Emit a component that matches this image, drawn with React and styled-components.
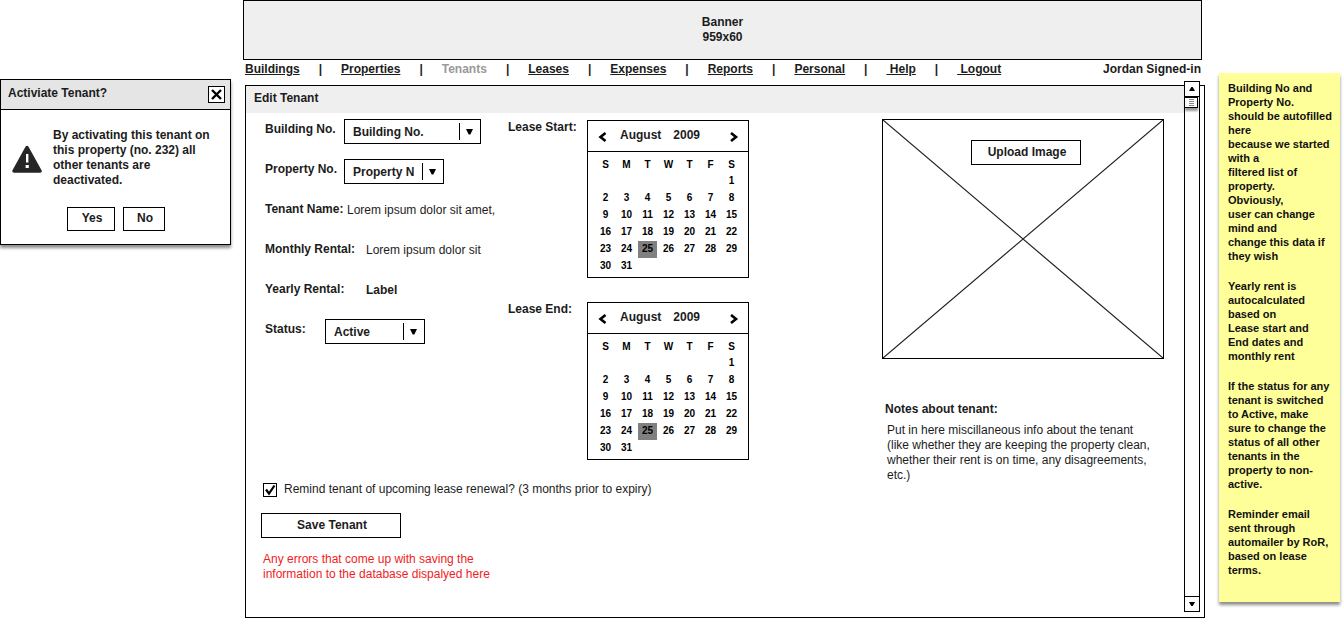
import React, { useState } from "react";
import styled, { createGlobalStyle } from "styled-components";

const GlobalStyle = createGlobalStyle`
  *, *::before, *::after { box-sizing: border-box; }
  body {
    margin: 0;
    background: #fff;
    color: #1c1c1c;
    font: 12px/15px "Liberation Sans", Arial, sans-serif;
  }
  p, h1, h2 { margin: 0; font-size: inherit; }
  button, select, input { font: inherit; color: inherit; margin: 0; }
`;

const Page = styled.div`
  display: flex;
  align-items: flex-start;
  padding-right: 3px;
`;

const Button = styled.button`
  width: ${(p) => p.$width}px;
  height: ${(p) => p.$height || 25}px;
  padding: 0 0 1px 2px;
  border: 1px solid #000;
  border-radius: 0;
  background: #fff;
  font-weight: bold;
  cursor: pointer;
`;

/* Confirmation dialog */

const Dialog = styled.section`
  flex: none;
  width: 231px;
  margin: 79px 12px 0 0;
  border: 1px solid #000;
  background: #fff;
  box-shadow: 0 3px 3px rgba(0, 0, 0, 0.45);
  font-weight: bold;
`;

const DialogHeader = styled.header`
  display: flex;
  justify-content: space-between;
  padding: 6px 5px 6px 7px;
  border-bottom: 1px solid #000;
  background: #e5e5e5;
`;

const CloseButton = styled.button`
  display: grid;
  place-items: center;
  width: 17px;
  height: 17px;
  padding: 0;
  border: 1px solid #000;
  background: #fff;
`;

const DialogMessage = styled.div`
  display: flex;
  gap: 11px;
  padding: 18px 20px 0 11px;

  svg { flex: none; margin-top: 17px; }
`;

const DialogActions = styled.div`
  display: flex;
  gap: 8px;
  padding: 19px 0 13px 66px;
`;

/* Main column */

const Main = styled.main`
  flex: 1;
  min-width: 0;
`;

const Banner = styled.header`
  height: 60px;
  margin-right: 3px;
  padding-top: 14px;
  border: 1px solid #000;
  background: #efefef;
  font-weight: bold;
  text-align: center;
`;

const NavBar = styled.nav`
  display: flex;
  justify-content: space-between;
  height: 25px;
  padding: 2px 4px 0 2px;
  font-weight: bold;
  white-space: pre;
`;

const NavLinks = styled.div`
  display: flex;
  gap: 19px;
`;

const NavLink = styled.a`
  color: ${(p) => (p.$current ? "#999" : "inherit")};
  text-decoration: ${(p) => (p.$current ? "none" : "underline")};
`;

const Panel = styled.div`
  display: flex;
  min-height: 533px;
  margin-left: 2px;
  padding-right: 4px;
  border: 1px solid #000;
`;

const PanelContent = styled.div`
  flex: 1;
  min-width: 0;
`;

const PanelTitle = styled.h1`
  height: 27px;
  padding: 5px 8px;
  background: #efefef;
`;

const PanelBody = styled.form`
  display: flex;
  padding: 6px 20px 0 15px;
`;

const Details = styled.div`
  flex: 1;
  min-width: 0;
`;

const DetailsTop = styled.div`
  display: flex;
`;

const Fields = styled.div`
  width: 247px;
  padding-left: 4px;
`;

const Field = styled.div`
  display: flex;
  align-items: flex-start;
  height: 40px;
`;

const FieldLabel = styled.label`
  flex: none;
  width: ${(p) => p.$width}px;
  padding-top: 3px;
  font-weight: bold;
`;

const FieldValue = styled.output`
  padding-top: 4px;
  font-weight: ${(p) => (p.$bold ? "bold" : "normal")};
`;

const SelectBox = styled.div`
  position: relative;
  width: ${(p) => p.$width}px;

  &::after {
    content: "";
    position: absolute;
    top: 4px;
    bottom: 4px;
    right: 21px;
    border-left: 1px solid #000;
    pointer-events: none;
  }

  svg {
    position: absolute;
    top: 10px;
    right: 8px;
    pointer-events: none;
  }
`;

const Select = styled.select`
  appearance: none;
  display: block;
  width: 100%;
  height: 25px;
  padding: 1px 29px 0 8px;
  border: 1px solid #000;
  border-radius: 0;
  background: #fff;
  font-weight: bold;
`;

const Leases = styled.div`
  display: flex;
  flex-direction: column;
  gap: 24px;
  padding-top: 1px;
`;

const Lease = styled.div`
  display: flex;
  font-weight: bold;
`;

const LeaseLabel = styled.div`
  width: 79px;
`;

const CalendarBox = styled.div`
  width: 162px;
  border: 1px solid #000;
`;

const CalendarHeader = styled.div`
  display: flex;
  justify-content: space-between;
  height: 31px;
  padding: 7px 9px 0;
  border-bottom: 1px solid #000;
`;

const MonthTitle = styled.div`
  display: flex;
  flex: 1;
  gap: 12px;
  padding-left: 13px;
`;

const ArrowButton = styled.button`
  display: grid;
  place-items: center;
  width: 10px;
  height: 17px;
  padding: 0;
  border: 0;
  background: none;
`;

const Days = styled.table`
  table-layout: fixed;
  width: 147px;
  height: 117px;
  margin: 6px 6px 2px 7px;
  border-spacing: 0;
  color: #000;
  font-size: 10px;
  line-height: 14px;
  text-align: center;

  th, td { padding: 0; }
`;

const Day = styled.td`
  border: solid transparent;
  border-width: 0 1px;
  background: ${(p) => (p.$selected ? "#808080" : "none")};
  background-clip: padding-box;
`;

const Reminder = styled.label`
  display: flex;
  align-items: center;
  gap: 7px;
  margin: 22px 0 16px 2px;
  height: 15px;
`;

const CheckBox = styled.span`
  display: grid;
  position: relative;

  input {
    appearance: none;
    width: 14px;
    height: 14px;
    border: 1px solid #000;
    background: #fff;
  }
  svg { position: absolute; top: 0; left: 0; display: none; pointer-events: none; }
  input:checked + svg { display: block; }
`;

const ErrorText = styled.p`
  max-width: 250px;
  margin: 14px 0 0 2px;
  color: #f01c24;
`;

const Side = styled.aside`
  flex: none;
  width: 282px;
`;

const ImageBox = styled.div`
  position: relative;
  height: 240px;
  padding: 20px 0 0 6px;
  border: 1px solid #000;
  text-align: center;

  svg { position: absolute; inset: 0; width: 100%; height: 100%; }
  button { position: relative; }
`;

const Notes = styled.div`
  padding: 43px 10px 0 3px;

  p { padding: 6px 0 0 2px; }
`;

/* Scroll bar */

const ScrollBar = styled.div`
  flex: none;
  display: flex;
  flex-direction: column;
  justify-content: space-between;
  width: 16px;
  margin: -5px 0 5px;
  border: 1px solid #000;
  background: #fff;
`;

const ScrollButton = styled.button`
  display: grid;
  place-items: center;
  width: 14px;
  height: 15px;
  padding: 0;
  border: solid #000;
  border-width: ${(p) => (p.$down ? "1px 0 0" : "0 0 1px")};
  background: #fff;
`;

const Thumb = styled.div`
  display: grid;
  place-items: center;
  width: 13px;
  height: 11px;
  border: solid #000;
  border-width: 1px 1px 1px 0;
  background: #fff;
  box-shadow: 0 3px 2px rgba(0, 0, 0, 0.4);
`;

/* Sticky note */

const StickyNote = styled.aside`
  flex: none;
  display: flex;
  flex-direction: column;
  gap: 16px;
  width: 121px;
  min-height: 529px;
  margin: 73px 0 0 14px;
  padding: 8px 0 16px 9px;
  background: #ff9;
  box-shadow: 0 3px 3px rgba(0, 0, 0, 0.45);
  color: #111;
  font-size: 11px;
  font-weight: bold;
  line-height: 14px;
  white-space: pre;
`;

const NAV = ["Buildings", "Properties", "Tenants", "Leases", "Expenses", "Reports", "Personal", " Help", " Logout"];

const WEEKDAYS = ["S", "M", "T", "W", "T", "F", "S"];

const REMARKS = [
  "Building No and\nProperty No.\nshould be autofilled\nhere\nbecause we started\nwith a\nfiltered list of\nproperty.\nObviously,\nuser can change\nmind and\nchange this data if\nthey wish",
  "Yearly rent is\nautocalculated\nbased on\nLease start and\nEnd dates and\nmonthly rent",
  "If the status for any\ntenant is switched\nto Active, make\nsure to change the\nstatus of all other\ntenants in the\nproperty to non-\nactive.",
  "Reminder email\nsent through\nautomailer by RoR,\nbased on lease\nterms.",
];

function Dropdown({ id, width, option }) {
  return (
    <SelectBox $width={width}>
      <Select id={id}>
        <option>{option}</option>
      </Select>
      <svg width="7" height="6" viewBox="0 0 7 6" aria-hidden="true">
        <path d="M0 0H7L4.3 5.5H2.7Z" />
      </svg>
    </SelectBox>
  );
}

function Calendar({ label }) {
  const [selected, setSelected] = useState(25);
  const weeks = [0, 1, 2, 3, 4, 5].map((week) =>
    WEEKDAYS.map((_, day) => {
      const date = week * 7 + day - 5;
      return date >= 1 && date <= 31 ? date : null;
    })
  );
  return (
    <CalendarBox role="group" aria-label={label}>
      <CalendarHeader>
        <ArrowButton type="button" aria-label="Previous month">
          <svg width="9" height="10" viewBox="0 0 9 10" fill="none" stroke="#000" strokeWidth="2.6">
            <path d="M7.5 1L2.5 5L7.5 9" />
          </svg>
        </ArrowButton>
        <MonthTitle>
          <span>August</span>
          <span>2009</span>
        </MonthTitle>
        <ArrowButton type="button" aria-label="Next month">
          <svg width="9" height="10" viewBox="0 0 9 10" fill="none" stroke="#000" strokeWidth="2.6">
            <path d="M1 1L6 5L1 9" />
          </svg>
        </ArrowButton>
      </CalendarHeader>
      <Days>
        <thead>
          <tr>
            {WEEKDAYS.map((d, i) => (
              <th key={i}>{d}</th>
            ))}
          </tr>
        </thead>
        <tbody>
          {weeks.map((week, w) => (
            <tr key={w}>
              {week.map((date, d) => (
                <Day key={d} $selected={date === selected} onClick={() => date && setSelected(date)}>
                  {date}
                </Day>
              ))}
            </tr>
          ))}
        </tbody>
      </Days>
    </CalendarBox>
  );
}

export default function App() {
  return (
    <>
      <GlobalStyle />
      <Page>
        <Dialog role="dialog" aria-labelledby="dialog-title">
          <DialogHeader>
            <h2 id="dialog-title">Activiate Tenant?</h2>
            <CloseButton type="button" aria-label="Close">
              <svg width="11" height="11" viewBox="0 0 11 11" stroke="#000" strokeWidth="2.4">
                <path d="M1 1L10 10M10 1L1 10" />
              </svg>
            </CloseButton>
          </DialogHeader>
          <DialogMessage>
            <svg width="30" height="28" viewBox="0 0 30 28" aria-hidden="true">
              <path
                d="M15 2.5L28 26H2Z"
                fill="#262626"
                stroke="#262626"
                strokeWidth="3.5"
                strokeLinejoin="round"
              />
              <path d="M14 9H16.4V17.5H14ZM13.6 20H16.8V23H13.6Z" fill="#fff" />
            </svg>
            <p>By activating this tenant on this property (no. 232) all other tenants are deactivated.</p>
          </DialogMessage>
          <DialogActions>
            <Button type="button" $width={48} $height={24}>Yes</Button>
            <Button type="button" $width={42} $height={24}>No</Button>
          </DialogActions>
        </Dialog>

        <Main>
          <Banner>
            <p>Banner</p>
            <p>959x60</p>
          </Banner>
          <NavBar>
            <NavLinks>
              {NAV.map((name, i) => (
                <React.Fragment key={name}>
                  {i > 0 && <span>|</span>}
                  <NavLink href="#" $current={name === "Tenants"}>{name}</NavLink>
                </React.Fragment>
              ))}
            </NavLinks>
            <span>Jordan Signed-in</span>
          </NavBar>

          <Panel>
            <PanelContent>
              <PanelTitle>Edit Tenant</PanelTitle>
              <PanelBody onSubmit={(e) => e.preventDefault()}>
                <Details>
                  <DetailsTop>
                    <Fields>
                      <Field>
                        <FieldLabel htmlFor="building" $width={79}>Building No.</FieldLabel>
                        <Dropdown id="building" width={137} option="Building No." />
                      </Field>
                      <Field>
                        <FieldLabel htmlFor="property" $width={79}>Property No.</FieldLabel>
                        <Dropdown id="property" width={100} option="Property No." />
                      </Field>
                      <Field>
                        <FieldLabel htmlFor="tenant" $width={82}>Tenant Name:</FieldLabel>
                        <FieldValue id="tenant">Lorem ipsum dolor sit amet,</FieldValue>
                      </Field>
                      <Field>
                        <FieldLabel htmlFor="monthly" $width={101}>Monthly Rental:</FieldLabel>
                        <FieldValue id="monthly">Lorem ipsum dolor sit</FieldValue>
                      </Field>
                      <Field>
                        <FieldLabel htmlFor="yearly" $width={101}>Yearly Rental:</FieldLabel>
                        <FieldValue id="yearly" $bold>Label</FieldValue>
                      </Field>
                      <Field>
                        <FieldLabel htmlFor="status" $width={60}>Status:</FieldLabel>
                        <Dropdown id="status" width={100} option="Active" />
                      </Field>
                    </Fields>
                    <Leases>
                      <Lease>
                        <LeaseLabel>Lease Start:</LeaseLabel>
                        <Calendar label="Lease start" />
                      </Lease>
                      <Lease>
                        <LeaseLabel>Lease End:</LeaseLabel>
                        <Calendar label="Lease end" />
                      </Lease>
                    </Leases>
                  </DetailsTop>
                  <Reminder>
                    <CheckBox>
                      <input type="checkbox" defaultChecked />
                      <svg width="14" height="14" viewBox="0 0 14 14" fill="none" stroke="#000" strokeWidth="2.2">
                        <path d="M3 6.5L6 10.5L11.5 2.5" />
                      </svg>
                    </CheckBox>
                    Remind tenant of upcoming lease renewal? (3 months prior to expiry)
                  </Reminder>
                  <Button type="submit" $width={140}>Save Tenant</Button>
                  <ErrorText role="alert">
                    Any errors that come up with saving the information to the database dispalyed here
                  </ErrorText>
                </Details>

                <Side>
                  <ImageBox>
                    <svg viewBox="0 0 280 238" preserveAspectRatio="none" stroke="#222" strokeWidth="1.2" aria-hidden="true">
                      <path d="M0 0L280 238M280 0L0 238" />
                    </svg>
                    <Button type="button" $width={110}>Upload Image</Button>
                  </ImageBox>
                  <Notes>
                    <h2>Notes about tenant:</h2>
                    <p>
                      Put in here miscillaneous info about the tenant (like whether they are keeping the
                      property clean, whether their rent is on time, any disagreements, etc.)
                    </p>
                  </Notes>
                </Side>
              </PanelBody>
            </PanelContent>
            <ScrollBar>
              <div>
                <ScrollButton type="button" aria-label="Scroll up">
                  <svg width="6" height="4" viewBox="0 0 6 4"><path d="M2.3 0H3.7L6 4H0Z" /></svg>
                </ScrollButton>
                <Thumb>
                  <svg width="5" height="7" viewBox="0 0 5 7" stroke="#888">
                    <path d="M0 .5H5M0 2.5H5M0 4.5H5M0 6.5H5" />
                  </svg>
                </Thumb>
              </div>
              <ScrollButton type="button" $down aria-label="Scroll down">
                <svg width="6" height="4" viewBox="0 0 6 4"><path d="M0 0H6L3.7 4H2.3Z" /></svg>
              </ScrollButton>
            </ScrollBar>
          </Panel>
        </Main>

        <StickyNote>
          {REMARKS.map((text) => (
            <p key={text}>{text}</p>
          ))}
        </StickyNote>
      </Page>
    </>
  );
}
